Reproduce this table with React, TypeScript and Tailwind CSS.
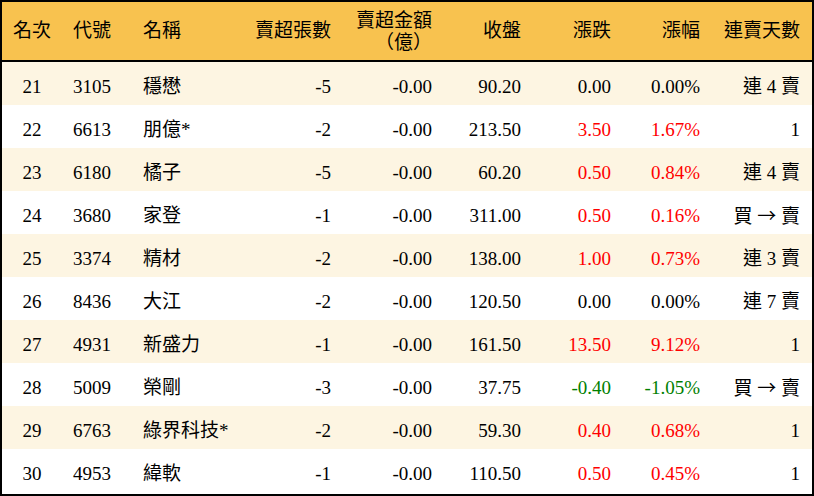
import React from "react";

type Row = {
  rank: string;
  code: string;
  name: string;
  lots: string;
  amt: string;
  close: string;
  chg: string;
  pct: string;
  days: string;
};

const rows: Row[] = [
  { rank: "21", code: "3105", name: "穩懋", lots: "-5", amt: "-0.00", close: "90.20", chg: "0.00", pct: "0.00%", days: "連 4 賣" },
  { rank: "22", code: "6613", name: "朋億*", lots: "-2", amt: "-0.00", close: "213.50", chg: "3.50", pct: "1.67%", days: "1" },
  { rank: "23", code: "6180", name: "橘子", lots: "-5", amt: "-0.00", close: "60.20", chg: "0.50", pct: "0.84%", days: "連 4 賣" },
  { rank: "24", code: "3680", name: "家登", lots: "-1", amt: "-0.00", close: "311.00", chg: "0.50", pct: "0.16%", days: "ARROW" },
  { rank: "25", code: "3374", name: "精材", lots: "-2", amt: "-0.00", close: "138.00", chg: "1.00", pct: "0.73%", days: "連 3 賣" },
  { rank: "26", code: "8436", name: "大江", lots: "-2", amt: "-0.00", close: "120.50", chg: "0.00", pct: "0.00%", days: "連 7 賣" },
  { rank: "27", code: "4931", name: "新盛力", lots: "-1", amt: "-0.00", close: "161.50", chg: "13.50", pct: "9.12%", days: "1" },
  { rank: "28", code: "5009", name: "榮剛", lots: "-3", amt: "-0.00", close: "37.75", chg: "-0.40", pct: "-1.05%", days: "ARROW" },
  { rank: "29", code: "6763", name: "綠界科技*", lots: "-2", amt: "-0.00", close: "59.30", chg: "0.40", pct: "0.68%", days: "1" },
  { rank: "30", code: "4953", name: "緯軟", lots: "-1", amt: "-0.00", close: "110.50", chg: "0.50", pct: "0.45%", days: "1" },
];

function colorOf(v: string) {
  if (v.startsWith("-")) return "text-[#008000]";
  if (/^0\.00/.test(v)) return "text-black";
  return "text-[#ff0000]";
}

const grid = "grid grid-cols-[60px_69px_100px_112px_101px_89px_90px_89px_100px]";

function Days({ v }: { v: string }) {
  if (v === "ARROW") {
    return (
      <span>
        買 <span style={{ fontFamily: '"Noto Sans CJK TC", sans-serif' }}>→</span> 賣
      </span>
    );
  }
  return <span>{v}</span>;
}

export default function App() {
  return (
    <div
      className="w-[814px] h-[496px] border-2 border-black bg-white text-black overflow-hidden"
      style={{ fontFamily: '"Liberation Serif", "Noto Sans CJK TC", serif' }}
    >
      <div className={`${grid} h-[60px] bg-[#f8c24f] items-center text-[19px] leading-[22px] border-b-2 border-black`}>
        <div className="text-center">名次</div>
        <div className="pl-[11px]">代號</div>
        <div className="pl-3">名稱</div>
        <div className="text-right pr-3">賣超張數</div>
        <div className="text-right pr-3 pt-[2px]">
          <div>賣超金額</div>
          <div>（億）</div>
        </div>
        <div className="text-right pr-3">收盤</div>
        <div className="text-right pr-3">漲跌</div>
        <div className="text-right pr-3">漲幅</div>
        <div className="text-right pr-3">連賣天數</div>
      </div>
      {rows.map((r, i) => (
        <div
          key={r.rank}
          className={`${grid} h-[43px] pt-[6px] items-center text-[19px] leading-[22px] ${i % 2 === 0 ? "bg-[#fdf5e2]" : "bg-white"}`}
        >
          <div className="text-center">{r.rank}</div>
          <div className="pl-[11px]">{r.code}</div>
          <div className="pl-3 whitespace-nowrap">{r.name}</div>
          <div className="text-right pr-3">{r.lots}</div>
          <div className="text-right pr-3">{r.amt}</div>
          <div className="text-right pr-3">{r.close}</div>
          <div className={`text-right pr-3 ${colorOf(r.chg)}`}>{r.chg}</div>
          <div className={`text-right pr-3 ${colorOf(r.pct)}`}>{r.pct}</div>
          <div className="text-right pr-3 whitespace-nowrap">
            <Days v={r.days} />
          </div>
        </div>
      ))}
    </div>
  );
}
